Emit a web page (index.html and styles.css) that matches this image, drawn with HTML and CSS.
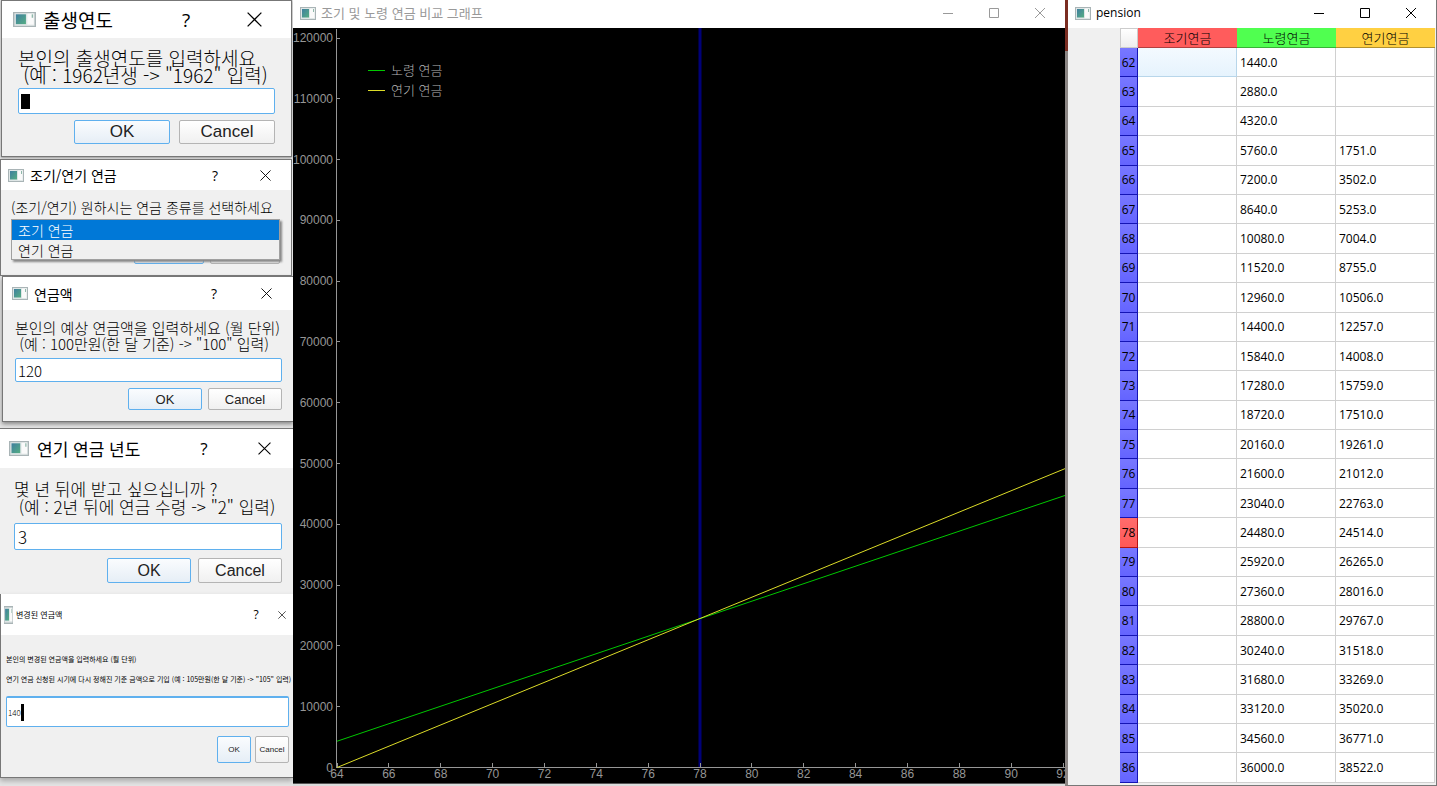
FILE: index.html
```html
<!DOCTYPE html>
<html lang="ko">

<head>
    <meta charset="UTF-8">
    <meta name="viewport" content="width=device-width, initial-scale=1.0">
    <title>pension</title>
    <link rel="stylesheet" href="styles.css">
</head>

<body>
    <svg class="defs" width="0" height="0">
        <linearGradient id="screen" x1="0" y1="0" x2="1" y2="1">
            <stop offset="0" stop-color="#3f7f9f" />
            <stop offset="1" stop-color="#55ad83" />
        </linearGradient>
        <symbol id="app" viewBox="0 0 16 13" preserveAspectRatio="none">
            <rect x="0.5" y="0.5" width="15" height="12" fill="#dfe6e6" stroke="#a9b4b6" />
            <rect x="2" y="2" width="7" height="8.5" fill="url(#screen)" />
            <rect x="10" y="1.5" width="4.5" height="9.5" fill="#fafafa" />
            <path d="M13.5 2v3" stroke="#8fb8aa" />
        </symbol>
        <symbol id="close" viewBox="0 0 12 12">
            <path d="M0.5 0.5l11 11M11.5 0.5l-11 11" fill="none" stroke="currentColor" />
        </symbol>
    </svg>

    <main class="desktop">
        <div class="dialogs">
            <form class="dialog birth">
                <header class="titlebar">
                    <svg class="icon"><use href="#app" /></svg>
                    <h2>출생연도</h2>
                    <button type="button" class="help">?</button>
                    <button type="button" class="close" aria-label="닫기"><svg><use href="#close" /></svg></button>
                </header>
                <div class="content">
                    <label for="birth">본인의 출생연도를 입력하세요
 (예 : 1962년생 -&gt; "1962" 입력)</label>
                    <div class="field">
                        <input type="text" id="birth">
                        <span class="caret"></span>
                    </div>
                    <div class="buttons">
                        <button type="button" class="ok">OK</button>
                        <button type="button">Cancel</button>
                    </div>
                </div>
            </form>

            <form class="dialog kind">
                <header class="titlebar">
                    <svg class="icon"><use href="#app" /></svg>
                    <h2>조기/연기 연금</h2>
                    <button type="button" class="help">?</button>
                    <button type="button" class="close" aria-label="닫기"><svg><use href="#close" /></svg></button>
                </header>
                <div class="content">
                    <label for="kind">(조기/연기) 원하시는 연금 종류를 선택하세요</label>
                    <div class="field">
                        <select id="kind" size="2">
                            <option selected>조기 연금</option>
                            <option>연기 연금</option>
                        </select>
                    </div>
                    <div class="buttons">
                        <button type="button" class="ok" aria-label="OK"></button>
                        <button type="button" aria-label="Cancel"></button>
                    </div>
                </div>
            </form>

            <form class="dialog amount">
                <header class="titlebar">
                    <svg class="icon"><use href="#app" /></svg>
                    <h2>연금액</h2>
                    <button type="button" class="help">?</button>
                    <button type="button" class="close" aria-label="닫기"><svg><use href="#close" /></svg></button>
                </header>
                <div class="content">
                    <label for="amount">본인의 예상 연금액을 입력하세요 (월 단위)
 (예 : 100만원(한 달 기준) -&gt; "100" 입력)</label>
                    <div class="field">
                        <input type="text" id="amount" value="120">
                    </div>
                    <div class="buttons">
                        <button type="button" class="ok">OK</button>
                        <button type="button">Cancel</button>
                    </div>
                </div>
            </form>

            <form class="dialog years">
                <header class="titlebar">
                    <svg class="icon"><use href="#app" /></svg>
                    <h2>연기 연금 년도</h2>
                    <button type="button" class="help">?</button>
                    <button type="button" class="close" aria-label="닫기"><svg><use href="#close" /></svg></button>
                </header>
                <div class="content">
                    <label for="years">몇 년 뒤에 받고 싶으십니까 ?
 (예 : 2년 뒤에 연금 수령 -&gt; "2" 입력)</label>
                    <div class="field">
                        <input type="text" id="years" value="3">
                    </div>
                    <div class="buttons">
                        <button type="button" class="ok">OK</button>
                        <button type="button">Cancel</button>
                    </div>
                </div>
            </form>

            <form class="dialog changed">
                <header class="titlebar">
                    <svg class="icon"><use href="#app" /></svg>
                    <h2>변경된 연금액</h2>
                    <button type="button" class="help">?</button>
                    <button type="button" class="close" aria-label="닫기"><svg><use href="#close" /></svg></button>
                </header>
                <div class="content">
                    <label for="changed">본인의 변경된 연금액을 입력하세요 (월 단위)
연기 연금 신청된 시기에 다시 정해진 기준 금액으로 기입 (예 : 105만원(한 달 기준) -&gt; "105" 입력)</label>
                    <div class="field">
                        <input type="text" id="changed" value="140">
                        <span class="caret"></span>
                    </div>
                    <div class="buttons">
                        <button type="button" class="ok">OK</button>
                        <button type="button">Cancel</button>
                    </div>
                </div>
            </form>
        </div>

        <section class="window graph">
            <header class="titlebar">
                <svg class="icon"><use href="#app" /></svg>
                <h2>조기 및 노령 연금 비교 그래프</h2>
                <button type="button" aria-label="최소화"><svg viewBox="0 0 10 10"><path d="M0 5.5h10" /></svg></button>
                <button type="button" aria-label="최대화"><svg viewBox="0 0 10 10"><path d="M0.5 0.5h9v9h-9z" /></svg></button>
                <button type="button" aria-label="닫기"><svg viewBox="0 0 10 10"><path d="M0 0l10 10M10 0l-10 10" /></svg></button>
            </header>
            <svg class="plot" id="plot" viewBox="0 0 772 755">
                <path class="now" d="M407 0V739" />
                <path class="axis" d="M43.5 1V739.5H772" />
                <path class="old" d="M75 42.5h17" />
                <text x="98" y="47">노령 연금</text>
                <path class="late" d="M75 62.5h17" />
                <text x="98" y="67">연기 연금</text>
            </svg>
        </section>

        <section class="window pension">
            <header class="titlebar">
                <svg class="icon"><use href="#app" /></svg>
                <h2>pension</h2>
                <button type="button" aria-label="최소화"><svg viewBox="0 0 10 10"><path d="M0 5.5h10" /></svg></button>
                <button type="button" aria-label="최대화"><svg viewBox="0 0 10 10"><path d="M0.5 0.5h9v9h-9z" /></svg></button>
                <button type="button" aria-label="닫기"><svg viewBox="0 0 10 10"><path d="M0 0l10 10M10 0l-10 10" /></svg></button>
            </header>
            <div class="sheet">
                <table>
                    <thead>
                        <tr>
                            <th class="corner"></th>
                            <th class="early">조기연금</th>
                            <th class="normal">노령연금</th>
                            <th class="deferred">연기연금</th>
                        </tr>
                    </thead>
                    <tbody id="rows"></tbody>
                </table>
            </div>
        </section>
    </main>
    <script src="script.js"></script>
</body>

</html>
```
FILE: styles.css
```css
* {
    box-sizing: border-box;
}

body {
    margin: 0;
    background-color: #dcdcdc;
    color: #000;
    font-family: "Noto Sans CJK KR", sans-serif;
}

h2 {
    margin: 0;
    font-weight: normal;
    white-space: nowrap;
}

button,
input,
select {
    margin: 0;
    padding: 0;
    font-family: inherit;
    color: inherit;
}

.defs {
    position: absolute;
}

.desktop {
    display: grid;
    grid-template-columns: 293px minmax(0, 1fr) 372px;
    min-height: 100vh;
}

/* title bars */
.titlebar {
    display: flex;
    align-items: center;
    background-color: white;
}

.titlebar h2 {
    flex: 1;
}

.titlebar button {
    display: flex;
    justify-content: center;
    align-items: center;
    border: none;
    background: none;
}

.icon {
    flex: none;
    width: 16px;
    height: 13px;
}

/* dialogs */
.dialogs {
    background-color: #e4e4e4;
}

.dialog {
    border: 1px solid #777;
    background-color: #f0f0f0;
}

.dialog .titlebar {
    height: var(--bar);
    font-size: var(--title);
}

.dialog h2 {
    font-size: var(--title);
    line-height: 24px;
}

.dialog .help {
    width: var(--help);
    font-family: "Open Sans", sans-serif;
    font-size: var(--title);
}

.dialog .close {
    width: var(--close);
}

.close svg {
    width: var(--cross);
    height: var(--cross);
}

.dialog label {
    display: block;
    white-space: pre;
    font-size: var(--text);
    font-weight: 300;
    line-height: var(--line);
}

.field {
    position: relative;
    height: var(--field);
}

.field input {
    display: block;
    width: 100%;
    height: 100%;
    padding: 0 3px;
    border: 1px solid #5fb0ee;
    border-radius: 2px;
    background-color: white;
    font-size: var(--text);
    font-weight: 300;
    outline: none;
}

.caret {
    position: absolute;
    background-color: black;
}

.buttons {
    display: flex;
    justify-content: flex-end;
}

.buttons button {
    width: var(--button);
    height: var(--button-height);
    border: 1px solid #b4b4b4;
    border-radius: 2px;
    background: linear-gradient(#fff, #f0f0f0);
    color: #222;
    font-family: "Liberation Sans", sans-serif;
    font-size: var(--text);
}

.buttons .ok {
    border-color: #5fb0ee;
    background: linear-gradient(#fafcfe, #e6eef6);
}

.birth {
    --bar: 37px;
    --title: 19px;
    --help: 62px;
    --close: 74px;
    --cross: 15px;
    --text: 19px;
    --line: 17px;
    --field: 26px;
    --button: 96px;
    --button-height: 24px;
    margin: 0 1px 2px;
    box-shadow: 0 1px 2px #999;
}

.birth .titlebar {
    padding-left: 11px;
}

.birth .icon {
    width: 23px;
    height: 15px;
    margin-right: 7px;
}

.birth .content {
    padding: 11px 16px 12px;
}

.birth .field {
    margin: 5px 0 6px;
}

.birth .caret {
    left: 3px;
    top: 6px;
    width: 9px;
    height: 15px;
}

.birth .buttons {
    gap: 9px;
}

.birth .buttons button {
    font-size: 17px;
}

.kind {
    --bar: 30px;
    --title: 14px;
    --help: 48px;
    --close: 52px;
    --cross: 11px;
    --text: 14px;
    --line: 18px;
    --field: 23px;
    --button: 70px;
    --button-height: 22px;
    margin: 0 1px 0 0;
}

.kind .titlebar {
    padding-left: 7px;
}

.kind .icon,
.amount .icon {
    margin-right: 6px;
}

.kind .content {
    padding: 8px 11px 11px 10px;
}

.kind .field {
    margin-top: 3px;
}

.kind select {
    position: absolute;
    z-index: 1;
    left: 0;
    top: 0;
    width: 100%;
    height: 41px;
    border: 1px solid #a0a0a0;
    border-radius: 0;
    background-color: #f0f0f0;
    box-shadow: 2px 2px 2px #888;
    font-size: var(--text);
    overflow: hidden;
    outline: none;
}

.kind option {
    height: 20px;
    min-height: 20px;
    padding: 0 6px;
    font-weight: 300;
    line-height: 20px;
}

.kind option:checked {
    background: linear-gradient(#0078d7, #0078d7);
    -webkit-text-fill-color: white;
}

.kind .buttons {
    gap: 6px;
}

.amount {
    --bar: 33px;
    --title: 14px;
    --help: 50px;
    --close: 54px;
    --cross: 11px;
    --text: 15px;
    --line: 16px;
    --field: 24px;
    --button: 74px;
    --button-height: 22px;
    margin: 0 0 6px 2px;
    border-right: none;
    box-shadow: 0 2px 4px #888;
}

.amount .titlebar {
    padding-left: 9px;
}

.amount .content {
    padding: 10px 11px 11px 12px;
}

.amount .field {
    margin: 6px 0;
}

.amount input {
    padding: 0 2px;
}

.amount .buttons {
    gap: 6px;
}

.amount .buttons button {
    font-size: 13px;
}

.years {
    --bar: 39px;
    --title: 17px;
    --help: 62px;
    --close: 58px;
    --cross: 13px;
    --text: 17px;
    --line: 18px;
    --field: 27px;
    --button: 84px;
    --button-height: 25px;
    border-width: 1px 0 0;
}

.years .titlebar {
    padding-left: 9px;
}

.years .icon {
    width: 20px;
    height: 15px;
    margin-right: 8px;
}

.years .content {
    padding: 12px 11px 11px 14px;
}

.years .field {
    margin: 7px 0 8px;
}

.years .buttons {
    gap: 7px;
}

.years .buttons button {
    font-size: 16px;
}

.changed {
    --bar: 41px;
    --title: 8px;
    --help: 30px;
    --close: 22px;
    --cross: 8px;
    --text: 8px;
    --line: 20px;
    --field: 31px;
    --button: 34px;
    --button-height: 27px;
    border-width: 0 0 1px 1px;
    box-shadow: 0 3px 5px #aaa;
}

.changed .titlebar {
    padding-left: 3px;
}

.changed .icon {
    width: 9px;
    height: 18px;
    margin-right: 3px;
}

.changed .help {
    font-size: 12px;
}

.changed .content {
    padding: 14px 4px 14px 5px;
}

.changed label {
    font-size: 7px;
    font-weight: normal;
}

.changed .field {
    margin: 7px 0 9px;
}

.changed input {
    padding: 0 1px;
    border-top-width: 2px;
}

.changed .caret {
    left: 15px;
    top: 8px;
    width: 3px;
    height: 17px;
}

.changed .buttons {
    gap: 4px;
}

/* windows */
.window {
    display: flex;
    flex-direction: column;
}

.window .titlebar {
    flex: none;
    height: 28px;
    padding: 0 2px 2px 7px;
}

.window .icon {
    margin-right: 5px;
}

.window h2 {
    font-size: 13px;
    line-height: 20px;
}

.window .titlebar button {
    width: 46px;
    height: 26px;
}

.titlebar button path {
    fill: none;
    stroke: currentColor;
}

.window .titlebar button svg {
    width: 10px;
    height: 10px;
}

.graph .titlebar {
    color: #999;
}

.plot {
    display: block;
    width: 100%;
    background-color: black;
    border-bottom: 1px solid #555;
}

.plot text {
    fill: #b4b4b4;
    font-size: 13px;
    font-weight: 300;
}

.plot .tick {
    fill: #969696;
    font-family: "Liberation Sans", sans-serif;
    font-size: 12px;
}

.plot .value {
    text-anchor: end;
}

.plot .age {
    text-anchor: middle;
}

.plot path {
    fill: none;
}

.plot .axis {
    stroke: #969696;
    shape-rendering: crispEdges;
}

.plot .now {
    stroke: #000078;
    stroke-width: 3;
}

.plot .old {
    stroke: #00c800;
}

.plot .late {
    stroke: #dcdc28;
}

/* table window, with a strip of the desktop to its left */
.pension {
    position: relative;
    border-left: 3px solid #8c8684;
    border-right: 1px solid #777;
    border-bottom: 1px solid #777;
    background-color: #f0f0f0;
}

.pension::before {
    content: "";
    position: absolute;
    left: -3px;
    top: 0;
    width: 3px;
    height: 51px;
    background-color: #7a2d22;
}

.pension h2,
.pension td,
.pension tbody th {
    font-family: "Open Sans", sans-serif;
    font-size: 12px;
}

.sheet {
    flex: 1;
    display: flex;
    padding: 0 1px 2px 52px;
}

.sheet table {
    width: 100%;
    table-layout: fixed;
    border-collapse: separate;
    border-spacing: 0;
    background-color: white;
}

.sheet th,
.sheet td {
    padding: 0;
    line-height: 16px;
    font-weight: normal;
}

.sheet thead th {
    height: 20px;
    font-size: 13px;
    font-weight: 300;
    border-bottom: 1px solid rgba(0, 0, 0, 0.3);
}

.sheet .corner {
    width: 18px;
    background: linear-gradient(#fff, #eee);
    border: 1px solid #ccc;
}

.sheet .early {
    background-color: #ff5c5c;
}

.sheet .normal {
    background-color: #50ff50;
}

.sheet .deferred {
    background-color: #ffd042;
}

.sheet tbody th {
    padding-top: 1px;
    background: linear-gradient(#7878ff, #6464ff);
    border-right: 1px solid #1414b4;
    border-bottom: 1px solid #1414b4;
}

.sheet tbody .cross {
    background: linear-gradient(#ff6c6c, #ff5858);
    border-color: #b41414;
}

.sheet td {
    padding: 1px 0 0 3px;
    border-right: 1px solid #d0d0d0;
    border-bottom: 1px solid #d0d0d0;
}

.sheet .selected {
    background: linear-gradient(#f4faff, #e6f3fd);
    border-color: #b8d6ea;
}
```
FILE: script.js
```javascript
const NS = 'http://www.w3.org/2000/svg';
const plot = document.querySelector('#plot');
const rows = document.querySelector('#rows');

// 노령: 62세부터 매년 1440, 연기: 65세부터 매년 1751
const normal = age => (age - 61) * 1440;
const deferred = age => (age - 64) * 1751;

const px = age => 44 + (age - 64) * 25.93;
const py = value => 739.5 - value * 0.006079;

function addPath(d, name) {
    const path = document.createElementNS(NS, 'path');
    path.setAttribute('d', d);
    path.setAttribute('class', name);
    plot.appendChild(path);
}

function addText(x, y, text, name) {
    const label = document.createElementNS(NS, 'text');
    label.setAttribute('x', x);
    label.setAttribute('y', y);
    label.setAttribute('class', 'tick ' + name);
    label.textContent = text;
    plot.appendChild(label);
}

for (let value = 0; value <= 120000; value += 10000) {
    addPath(`M43 ${py(value)}h4`, 'axis');
    addText(40, py(value) + 4, value, 'value');
}

for (let age = 64; age <= 92; age += 2) {
    addPath(`M${px(age)} 739v-4`, 'axis');
    addText(px(age), 750, age, 'age');
}

// 그래프 오른쪽 끝까지 선을 잇는다
const end = 92.08;
addPath(`M${px(64)} ${py(normal(64))}L${px(end)} ${py(normal(end))}`, 'old');
addPath(`M${px(64)} ${py(deferred(64))}L${px(end)} ${py(deferred(end))}`, 'late');

for (let age = 62; age <= 86; age++) {
    const row = rows.insertRow();
    const head = document.createElement('th');
    head.textContent = age;
    if (age === 78) {
        head.className = 'cross';
    }
    row.appendChild(head);
    const early = row.insertCell();
    if (age === 62) {
        early.className = 'selected';
    }
    row.insertCell().textContent = normal(age).toFixed(1);
    row.insertCell().textContent = age > 64 ? deferred(age).toFixed(1) : '';
}
```
